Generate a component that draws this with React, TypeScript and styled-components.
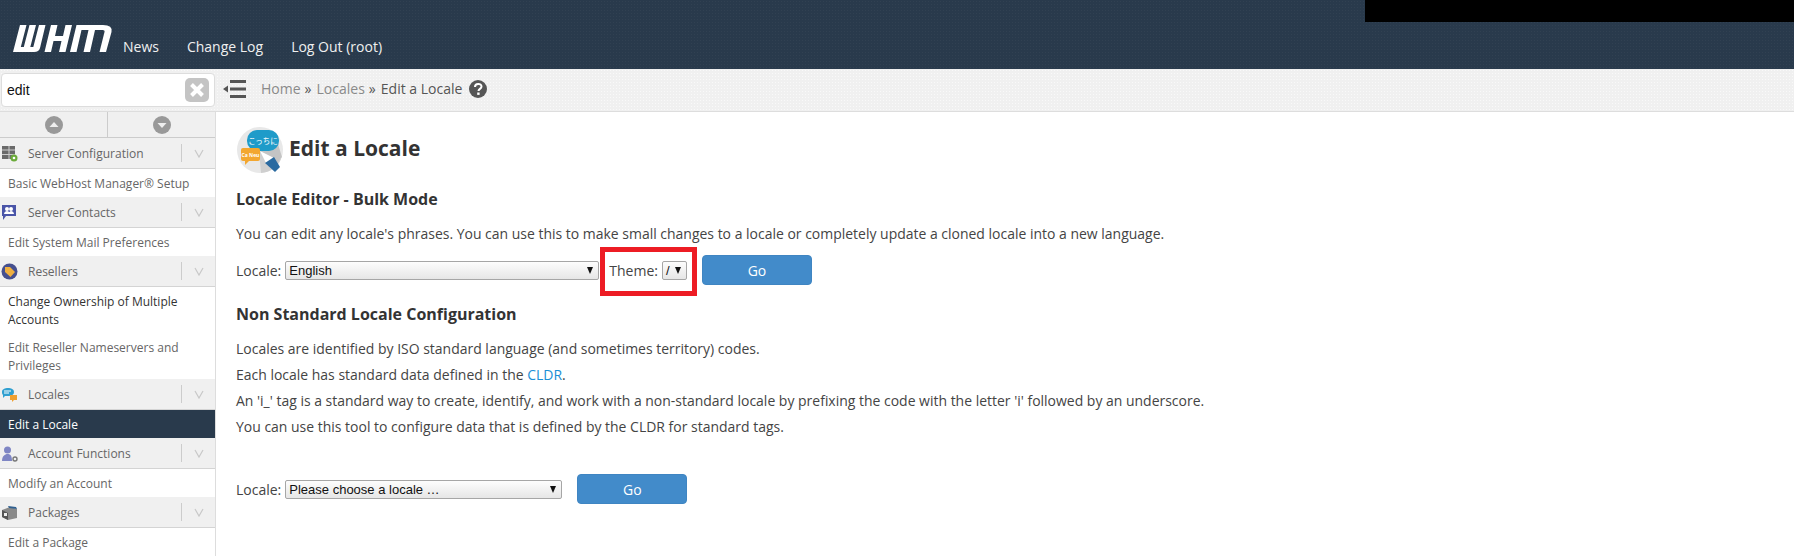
import React from 'react';
import styled, { createGlobalStyle } from 'styled-components';

const Global = createGlobalStyle`
  html, body { margin: 0; padding: 0; background: #fff; }
  body { font-family: "Open Sans", "Liberation Sans", sans-serif; font-size: 14px; color: #333; overflow: hidden; }
  * { box-sizing: border-box; }
`;

const Page = styled.div`
  width: 1794px;
  height: 556px;
  display: flex;
  flex-direction: column;
  overflow: hidden;
`;
const Header = styled.header`
  height: 69px;
  background-color: #293a4c;
  background-image: radial-gradient(rgba(255, 255, 255, 0.035) 1px, transparent 1px);
  background-size: 3px 3px;
  position: relative;
  display: flex;
  align-items: flex-end;
  padding-left: 13px;
`;
const Redaction = styled.div`
  position: absolute;
  right: 0;
  top: 0;
  width: 429px;
  height: 22px;
  background: #000;
`;
const LogoMark = styled.svg`
  width: 100px;
  height: 29px;
  margin-bottom: 16px;
  margin-right: 10px;
`;
const Nav = styled.nav`
  display: flex;
  gap: 28px;
  margin-bottom: 12px;
`;
const NavLink = styled.a`
  color: #f0f0f0;
  font-size: 14px;
  line-height: 20px;
`;
const TopBar = styled.div`
  height: 43px;
  background-color: #f0f0f0;
  background-image: radial-gradient(rgba(255, 255, 255, 0.6) 1px, transparent 1px);
  background-size: 3px 3px;
  border-bottom: 1px solid #ddd;
  display: flex;
  align-items: center;
`;
const SearchBox = styled.div`
  width: 214px;
  height: 34px;
  margin-left: 1px;
  background: #fff;
  border: 1px solid #ddd;
  border-radius: 4px;
  display: flex;
  align-items: center;
  justify-content: space-between;
  padding: 0 5px 0 5px;
  color: #111;
  font-family: "Liberation Sans", Arial, sans-serif;
  font-size: 14px;
`;
const ClearBtn = styled.span`
  width: 24px;
  height: 24px;
  border-radius: 5px;
  background: #c4c4c4;
  display: flex;
  align-items: center;
  justify-content: center;
`;
const MenuIcon = styled.svg`
  width: 23px;
  height: 18px;
  margin-left: 8px;
  margin-right: 15px;
  margin-bottom: 2px;
`;
const Crumbs = styled.div`
  display: flex;
  align-items: center;
  font-size: 14px;
  color: #888;
  padding-bottom: 3px;
`;
const Crumb = styled.span`
  color: #8a8a8a;
`;
const Sep = styled.span`
  color: #555;
  margin: 0 5px 0 4px;
`;
const Current = styled.span`
  color: #555;
`;
const Help = styled.svg`
  width: 18px;
  height: 18px;
  margin-left: 7px;
`;
const Body = styled.div`
  flex: 1;
  display: flex;
  min-height: 0;
`;
const Sidebar = styled.aside`
  width: 216px;
  flex: none;
  border-right: 1px solid #ddd;
  font-size: 12px;
  overflow: hidden;
`;
const Arrows = styled.div`
  height: 26px;
  background: #f0f0f0;
  border-bottom: 1px solid #ccc;
  display: flex;
`;
const ArrowCell = styled.div`
  flex: 1;
  display: flex;
  align-items: center;
  justify-content: center;
  & + & { border-left: 1px solid #ccc; }
`;
const Category = styled.div`
  height: 31px;
  background: #f0f0f0;
  border-bottom: 1px solid #d4d4d4;
  display: flex;
  align-items: center;
  color: #666;
  position: relative;
`;
const CatIcon = styled.svg`
  width: 17px;
  height: 17px;
  margin-left: 1px;
  margin-right: 10px;
  flex: none;
`;
const CatLabel = styled.span`
  flex: 1;
`;
const Chevron = styled.div`
  width: 34px;
  height: 18px;
  border-left: 1px solid #ccc;
  display: flex;
  align-items: center;
  justify-content: center;
`;
const Item = styled.div<{ $active?: boolean; $dark?: boolean }>`
  padding: 6px 8px 4px;
  line-height: 18px;
  color: ${p => (p.$active ? '#fff' : p.$dark ? '#333' : '#666')};
  background: ${p => (p.$active ? '#293a4c' : '#fff')};
`;
const Main = styled.main`
  flex: 1;
  padding: 15px 0 0 20px;
`;
const TitleRow = styled.div`
  display: flex;
  align-items: center;
  height: 46px;
  gap: 6px;
  padding-left: 1px;
`;
const Title = styled.h1`
  margin: 0 0 5px;
  font-size: 21px;
  line-height: 28px;
  font-weight: 700;
  color: #333;
`;
const Section = styled.h2`
  margin: 16px 0 0;
  font-size: 16px;
  line-height: 20px;
  font-weight: 700;
  color: #333;
`;
const SectionNext = styled(Section)`
  margin-top: 19px;
`;
const Para = styled.p`
  margin: 0;
  line-height: 26px;
  font-size: 13.97px;
  color: #444;
`;
const Lead = styled(Para)`
  margin-top: 12px;
`;
const FormRow = styled.div<{ $top: number }>`
  display: flex;
  align-items: center;
  margin-top: ${p => p.$top}px;
  font-size: 14px;
  color: #444;
  height: 30px;
`;
const SelectBox = styled.div<{ $w: number }>`
  width: ${p => p.$w}px;
  height: 19px;
  margin-left: 4px;
  border: 1px solid #a6a6a6;
  border-radius: 2px;
  background: linear-gradient(#fdfdfd, #e6e6e6);
  font-family: "Liberation Sans", Arial, sans-serif;
  font-size: 13px;
  color: #111;
  display: flex;
  align-items: center;
  justify-content: space-between;
  padding: 0 5px 0 3px;
`;
const WideSelect = styled(SelectBox)`
  margin-right: 15px;
`;
const Arrow = styled.span`
  width: 0;
  height: 0;
  border-left: 3.5px solid transparent;
  border-right: 3.5px solid transparent;
  border-top: 7px solid #111;
`;
const ThemeGroup = styled.div`
  position: relative;
  display: flex;
  align-items: center;
  margin-left: 10px;
  margin-right: 15px;
`;
const Highlight = styled.div`
  position: absolute;
  left: -9px;
  right: -10px;
  top: -14px;
  bottom: -16px;
  border: 5px solid #ed1c24;
  pointer-events: none;
`;
const GoButton = styled.button`
  width: 110px;
  height: 30px;
  background: #428bca;
  border: 1px solid #3f85c2;
  border-radius: 4px;
  color: #fff;
  font-family: inherit;
  font-size: 14px;
  padding: 0;
`;
const Link = styled.a`
  color: #1b8fd6;
`;

const Caret = ({ up }: { up?: boolean }) => (
  <svg width="18" height="18" viewBox="0 0 18 18">
    <circle cx="9" cy="9" r="9" fill="#999" />
    <path d={up ? 'M4.5 11h9L9 6z' : 'M4.5 7h9L9 12z'} fill="#eee" />
  </svg>
);
const Vee = () => (
  <svg width="10" height="9" viewBox="0 0 10 9">
    <path d="M1 1l4 7 4-7" fill="none" stroke="#c8c8c8" strokeWidth="1.2" />
  </svg>
);

const ServerIcon = () => (
  <CatIcon viewBox="0 0 17 17">
    <rect x="1" y="1" width="13" height="13" fill="#6a6a6a" />
    <path d="M1 5h13M1 9.5h13M8 1v13" stroke="#ccc" strokeWidth="1" />
    <circle cx="13" cy="13" r="3.5" fill="#6bab3a" />
    <circle cx="13" cy="13" r="1.3" fill="#fff" />
  </CatIcon>
);
const ContactsIcon = () => (
  <CatIcon viewBox="0 0 17 17">
    <path d="M1 1h14v11H5l-3 4v-4H1z" fill="#4a55a8" />
    <circle cx="6" cy="5" r="2" fill="#fff" />
    <circle cx="10" cy="5" r="2" fill="#fff" />
    <path d="M3 10c0-2 2-3 3-3s3 1 3 3zM8 10c0-2 1-3 2-3s3 1 3 3z" fill="#fff" />
  </CatIcon>
);
const ResellerIcon = () => (
  <CatIcon viewBox="0 0 17 17">
    <circle cx="8.5" cy="8.5" r="8" fill="#46508f" />
    <path d="M4 4h5l5 5-4.500 5-5.500-5z" fill="#f0b040" />
  </CatIcon>
);
const LocaleIcon = () => (
  <CatIcon viewBox="0 0 17 17">
    <path d="M1 6c0-3 3-4 6-4s6 1 6 4-3 4-6 4H4l-2 2v-3C1 8 1 7 1 6z" fill="#2f9fd0" />
    <path d="M3 5h7M3 7h5" stroke="#fff" strokeWidth="1" />
    <path d="M9 9h7v5h-3l-2 2v-2H9z" fill="#f0a030" />
  </CatIcon>
);
const AccountIcon = () => (
  <CatIcon viewBox="0 0 17 17">
    <circle cx="6.500" cy="5" r="3.500" fill="#7f86c4" />
    <path d="M1 16c0-5 3-7 5.500-7S11 10 11 16z" fill="#7f86c4" />
    <circle cx="14" cy="14" r="2" fill="none" stroke="#777" strokeWidth="1.400" />
  </CatIcon>
);
const PackageIcon = () => (
  <CatIcon viewBox="0 0 17 17">
    <path d="M1 6l8-3 7 2v9l-9 2-6-3z" fill="#8a8a8a" />
    <path d="M1 6l6 3v7l-6-3z" fill="#555" />
    <path d="M7 2l8 1 1 2-8-1z" fill="#2f5f8f" />
    <rect x="3" y="9" width="3" height="3" fill="#eee" />
  </CatIcon>
);

const Cat = ({ icon, label }: { icon: React.ReactNode; label: string }) => (
  <Category>
    {icon}
    <CatLabel>{label}</CatLabel>
    <Chevron>
      <Vee />
    </Chevron>
  </Category>
);

export default function App() {
  return (
    <Page>
      <Global />
      <Header>
        <Redaction />
        <LogoMark viewBox="0 0 100 29" aria-label="WHM logo">
          <path
            d="M7 1h6.500L7.800 23h3L16.500 1H23L17.300 23h3L26 1h6.500L27 24Q26 28 21 28H0z"
            fill="#fff"
          />
          <path d="M38 1h6.500L42 12h8l2.500-11H59L52.500 28H46L48.500 17h-8L38 28h-6.500z" fill="#fff" />
          <path
            d="M63.500 1H90Q100 1 98.500 8L93 28H86.500L91.500 8Q92 6 89.500 6H82L77 28H70.500L75.500 6H68.500L63.500 28H57z"
            fill="#fff"
          />
        </LogoMark>
        <Nav>
          <NavLink>News</NavLink>
          <NavLink>Change Log</NavLink>
          <NavLink>Log Out (root)</NavLink>
        </Nav>
      </Header>
      <TopBar>
        <SearchBox>
          edit
          <ClearBtn>
            <svg width="16" height="16" viewBox="0 0 16 16">
              <path d="M2.500 2.500l11 11M13.500 2.500l-11 11" stroke="#fff" strokeWidth="4" />
            </svg>
          </ClearBtn>
        </SearchBox>
        <MenuIcon viewBox="0 0 23 18">
          <path d="M7 0h16v3H7zM7 7.500h16v3H7zM7 15h16v3H7z" fill="#555" />
          <path d="M0 9l5-3.500v7z" fill="#555" />
        </MenuIcon>
        <Crumbs>
          <Crumb>Home</Crumb>
          <Sep>»</Sep>
          <Crumb>Locales</Crumb>
          <Sep>»</Sep>
          <Current>Edit a Locale</Current>
          <Help viewBox="0 0 18 18">
            <circle cx="9" cy="9" r="9" fill="#555" />
            <path d="M6 7c0-4 6.500-4 6.500-.5 0 2.500-3 2.300-3 4.500" fill="none" stroke="#fff" strokeWidth="2" />
            <rect x="8.200" y="12.500" width="2.400" height="2.400" fill="#fff" />
          </Help>
        </Crumbs>
      </TopBar>
      <Body>
        <Sidebar>
          <Arrows>
            <ArrowCell><Caret up /></ArrowCell>
            <ArrowCell><Caret /></ArrowCell>
          </Arrows>
          <Cat icon={<ServerIcon />} label="Server Configuration" />
          <Item>Basic WebHost Manager® Setup</Item>
          <Cat icon={<ContactsIcon />} label="Server Contacts" />
          <Item>Edit System Mail Preferences</Item>
          <Cat icon={<ResellerIcon />} label="Resellers" />
          <Item $dark>Change Ownership of Multiple Accounts</Item>
          <Item>Edit Reseller Nameservers and Privileges</Item>
          <Cat icon={<LocaleIcon />} label="Locales" />
          <Item $active>Edit a Locale</Item>
          <Cat icon={<AccountIcon />} label="Account Functions" />
          <Item>Modify an Account</Item>
          <Cat icon={<PackageIcon />} label="Packages" />
          <Item>Edit a Package</Item>
        </Sidebar>
        <Main>
          <TitleRow>
            <svg width="46" height="46" viewBox="0 0 46 46">
              <circle cx="23" cy="23" r="23" fill="#e8e8e8" />
              <path d="M22 24L40 30 44 32A23 23 0 0 1 24 46z" fill="#cfcfcf" />
              <path d="M40 14L45 30 38 38 22 24z" fill="#c4c4c4" />
              <rect x="10" y="3" width="32" height="21" rx="10" fill="#1f9bc9" />
              <text x="26" y="17" fontSize="7.500" fill="#fff" textAnchor="middle" fontFamily="Noto Sans CJK JP, sans-serif">こっちに</text>
              <rect x="4" y="21" width="19" height="13" rx="2" fill="#f3a730" />
              <path d="M8 34v4l4-4z" fill="#f3a730" />
              <text x="13.500" y="30" fontSize="5" fill="#fff" textAnchor="middle" fontWeight="700">Ca Neu</text>
              <path d="M23 24l14 7-8 5z" fill="#fff" />
              <path d="M28 36l9-6 6 10-5 5z" fill="#2a6aa0" />
            </svg>
            <Title>Edit a Locale</Title>
          </TitleRow>
          <Section>Locale Editor - Bulk Mode</Section>
          <Lead>You can edit any locale's phrases. You can use this to make small changes to a locale or completely update a cloned locale into a new language.</Lead>
          <FormRow $top={8}>
            Locale:
            <SelectBox $w={314}>English<Arrow /></SelectBox>
            <ThemeGroup>
              Theme:
              <SelectBox $w={25}>/<Arrow /></SelectBox>
              <Highlight />
            </ThemeGroup>
            <GoButton>Go</GoButton>
          </FormRow>
          <SectionNext>Non Standard Locale Configuration</SectionNext>
          <Lead>Locales are identified by ISO standard language (and sometimes territory) codes.</Lead>
          <Para>Each locale has standard data defined in the <Link>CLDR</Link>.</Para>
          <Para>An 'i_' tag is a standard way to create, identify, and work with a non-standard locale by prefixing the code with the letter 'i' followed by an underscore.</Para>
          <Para>You can use this tool to configure data that is defined by the CLDR for standard tags.</Para>
          <FormRow $top={34}>
            Locale:
            <WideSelect $w={277}>Please choose a locale …<Arrow /></WideSelect>
            <GoButton>Go</GoButton>
          </FormRow>
        </Main>
      </Body>
    </Page>
  );
}
